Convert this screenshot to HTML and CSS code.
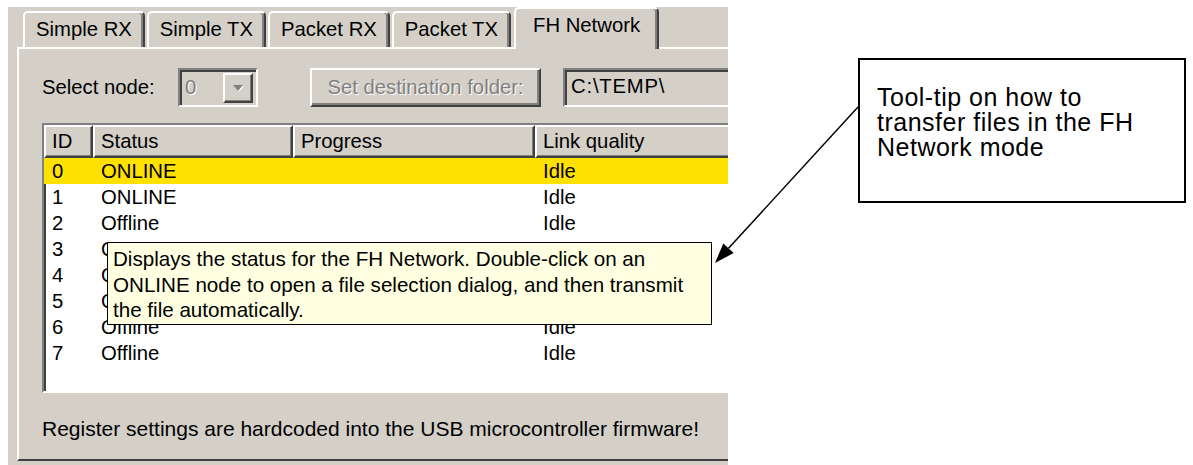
FILE: index.html
```html
<!DOCTYPE html>
<html lang="en">
<head>
    <meta charset="UTF-8">
    <title>FH Network</title>
    <link rel="stylesheet" href="styles.css">
</head>
<body>
    <div id="page">
        <!-- Screenshot of the program window -->
        <div class="shot">
            <div class="tabs">
                <div class="tab">Simple RX</div>
                <div class="tab">Simple TX</div>
                <div class="tab">Packet RX</div>
                <div class="tab">Packet TX</div>
                <div class="tab active">FH Network</div>
            </div>

            <div class="panel">
                <div class="toolbar">
                    <span class="label">Select node:</span>
                    <div class="combo">
                        <span class="combo-value">0</span>
                        <span class="combo-btn">
                            <svg width="12" height="8" viewBox="0 0 12 8"><path d="M1 1h10L6 7z" fill="#fff" transform="translate(1 1)"/><path d="M1 1h10L6 7z" fill="#808080"/></svg>
                        </span>
                    </div>
                    <button class="btn" disabled>Set destination folder:</button>
                    <div class="field">C:\TEMP\</div>
                </div>

                <div class="list">
                    <div class="list-head">
                        <div class="hcell">ID</div>
                        <div class="hcell">Status</div>
                        <div class="hcell">Progress</div>
                        <div class="hcell">Link quality</div>
                    </div>
                    <div class="row selected"><span>0</span><span>ONLINE</span><span></span><span>Idle</span></div>
                    <div class="row"><span>1</span><span>ONLINE</span><span></span><span>Idle</span></div>
                    <div class="row"><span>2</span><span>Offline</span><span></span><span>Idle</span></div>
                    <!-- rows 3-5 sit under the tooltip, only the first letter peeks out -->
                    <div class="row"><span>3</span><span>O</span><span></span><span></span></div>
                    <div class="row"><span>4</span><span>O</span><span></span><span></span></div>
                    <div class="row"><span>5</span><span>O</span><span></span><span></span></div>
                    <div class="row"><span>6</span><span>Offline</span><span></span><span>Idle</span></div>
                    <div class="row"><span>7</span><span>Offline</span><span></span><span>Idle</span></div>

                    <div class="tooltip">Displays the status for the FH Network. Double-click on an<br>ONLINE node to open a file selection dialog, and then transmit<br>the file automatically.</div>
                </div>

                <p class="note">Register settings are hardcoded into the USB microcontroller firmware!</p>
            </div>
        </div>

        <!-- Annotation -->
        <div class="callout">Tool-tip on how to<br>transfer files in the FH<br>Network mode</div>

        <svg class="arrow" width="1193" height="465" viewBox="0 0 1193 465">
            <line x1="858" y1="107" x2="728.5" y2="248.3" stroke="#000" stroke-width="1.5"/>
            <polygon points="715,263 733.7,253 723.3,243.6" fill="#000"/>
        </svg>
    </div>
</body>
</html>
```

FILE: styles.css
```css
body {
    margin: 0;
    background: #fff;
    font-family: "Liberation Sans", Arial, sans-serif;
    color: #000;
}
#page {
    position: relative;
    display: flex;
    align-items: flex-start;
    width: 1193px;
    height: 465px;
    overflow: hidden;
}

/* window screenshot */
.shot {
    margin: 7px 0 0 8px;
    width: 720px;
    height: 458px;
    flex-shrink: 0;
    background: #d4d0c8;
    overflow: hidden;
    font-size: 20.3px;
}
.tabs {
    display: flex;
    align-items: flex-start;
    height: 40px;
    padding-left: 15px;
    gap: 2px;
}
.tab {
    box-sizing: border-box;
    height: 36px;
    margin-top: 4px;
    padding: 0 11px;
    line-height: 32px;
    border: 2px solid #fff;
    border-right-color: #404040;
    border-bottom: none;
    border-radius: 5px 5px 0 0;
    box-shadow: inset -2px 0 0 #808080;
    white-space: nowrap;
}
.tab.active {
    position: relative;
    z-index: 1;
    height: 42px;
    margin-top: 0;
    margin-left: 1px;
    padding: 0 17px;
    background: #d4d0c8;
}
.panel {
    box-sizing: border-box;
    width: 800px;
    height: 414px;
    margin-left: 9px;
    padding: 19px 0 0 23px;
    border: 2px solid;
    border-color: #fff #404040 #404040 #fff;
}
.toolbar {
    display: flex;
    align-items: center;
    height: 39px;
}
.label {
    width: 136px;
}
.combo {
    box-sizing: border-box;
    display: flex;
    align-items: center;
    justify-content: space-between;
    width: 80px;
    height: 39px;
    padding: 0 3px 0 4px;
    border: 2px solid;
    border-color: #808080 #fff #fff #808080;
    box-shadow: inset 2px 2px 0 #404040;
}
.combo-value {
    color: #808080;
    text-shadow: 1px 1px 0 #fff;
    padding-left: 1px;
}
.combo-btn {
    box-sizing: border-box;
    display: flex;
    align-items: center;
    justify-content: center;
    width: 30px;
    height: 30px;
    border: 2px solid;
    border-color: #fff #404040 #404040 #fff;
    box-shadow: inset -1px -1px 0 #808080;
}
.btn {
    box-sizing: border-box;
    width: 231px;
    height: 39px;
    margin-left: 52px;
    padding: 0;
    font: inherit;
    color: #808080;
    text-shadow: 1px 1px 0 #fff;
    background: #d4d0c8;
    border: 2px solid;
    border-color: #fff #404040 #404040 #fff;
    box-shadow: inset -2px -2px 0 #808080;
}
.field {
    box-sizing: border-box;
    width: 200px;
    height: 39px;
    margin-left: 22px;
    padding-left: 6px;
    line-height: 33px;
    letter-spacing: 0.8px;
    border: 2px solid;
    border-color: #808080 #fff #fff #808080;
    box-shadow: inset 2px 2px 0 #404040;
}

/* list view */
.list {
    position: relative;
    box-sizing: border-box;
    width: 760px;
    height: 270px;
    margin-top: 16px;
    background: #fff;
    border: 2px solid;
    border-color: #808080 #fff #fff #808080;
    box-shadow: inset 2px 2px 0 #404040;
}
.list-head,
.row {
    display: grid;
    grid-template-columns: 49px 200px 242px 1fr;
}
.list-head {
    height: 33px;
}
.hcell {
    box-sizing: border-box;
    padding-left: 6px;
    line-height: 29px;
    background: #d4d0c8;
    border: 2px solid;
    border-color: #fff #404040 #404040 #fff;
    box-shadow: inset -1px -1px 0 #808080;
}
.row {
    height: 26px;
    line-height: 26px;
}
.row span {
    padding-left: 8px;
}
.row.selected {
    background: #ffe100;
}
.tooltip {
    position: absolute;
    left: 63px;
    top: 117px;
    box-sizing: border-box;
    width: 605px;
    height: 83px;
    padding: 3px 0 0 5px;
    font-size: 20.6px;
    line-height: 25.5px;
    background: #ffffe1;
    border: 1px solid #000;
    white-space: nowrap;
}
.note {
    margin: 24px 0 0;
    font-size: 21px;
    line-height: 24px;
}

/* annotation */
.callout {
    box-sizing: border-box;
    width: 328px;
    height: 145px;
    margin: 58px 0 0 130px;
    padding: 25px 0 0 17px;
    font-size: 25px;
    line-height: 25px;
    letter-spacing: 0.5px;
    border: 2px solid #000;
}
.arrow {
    position: absolute;
    left: 0;
    top: 0;
    pointer-events: none;
}
```
